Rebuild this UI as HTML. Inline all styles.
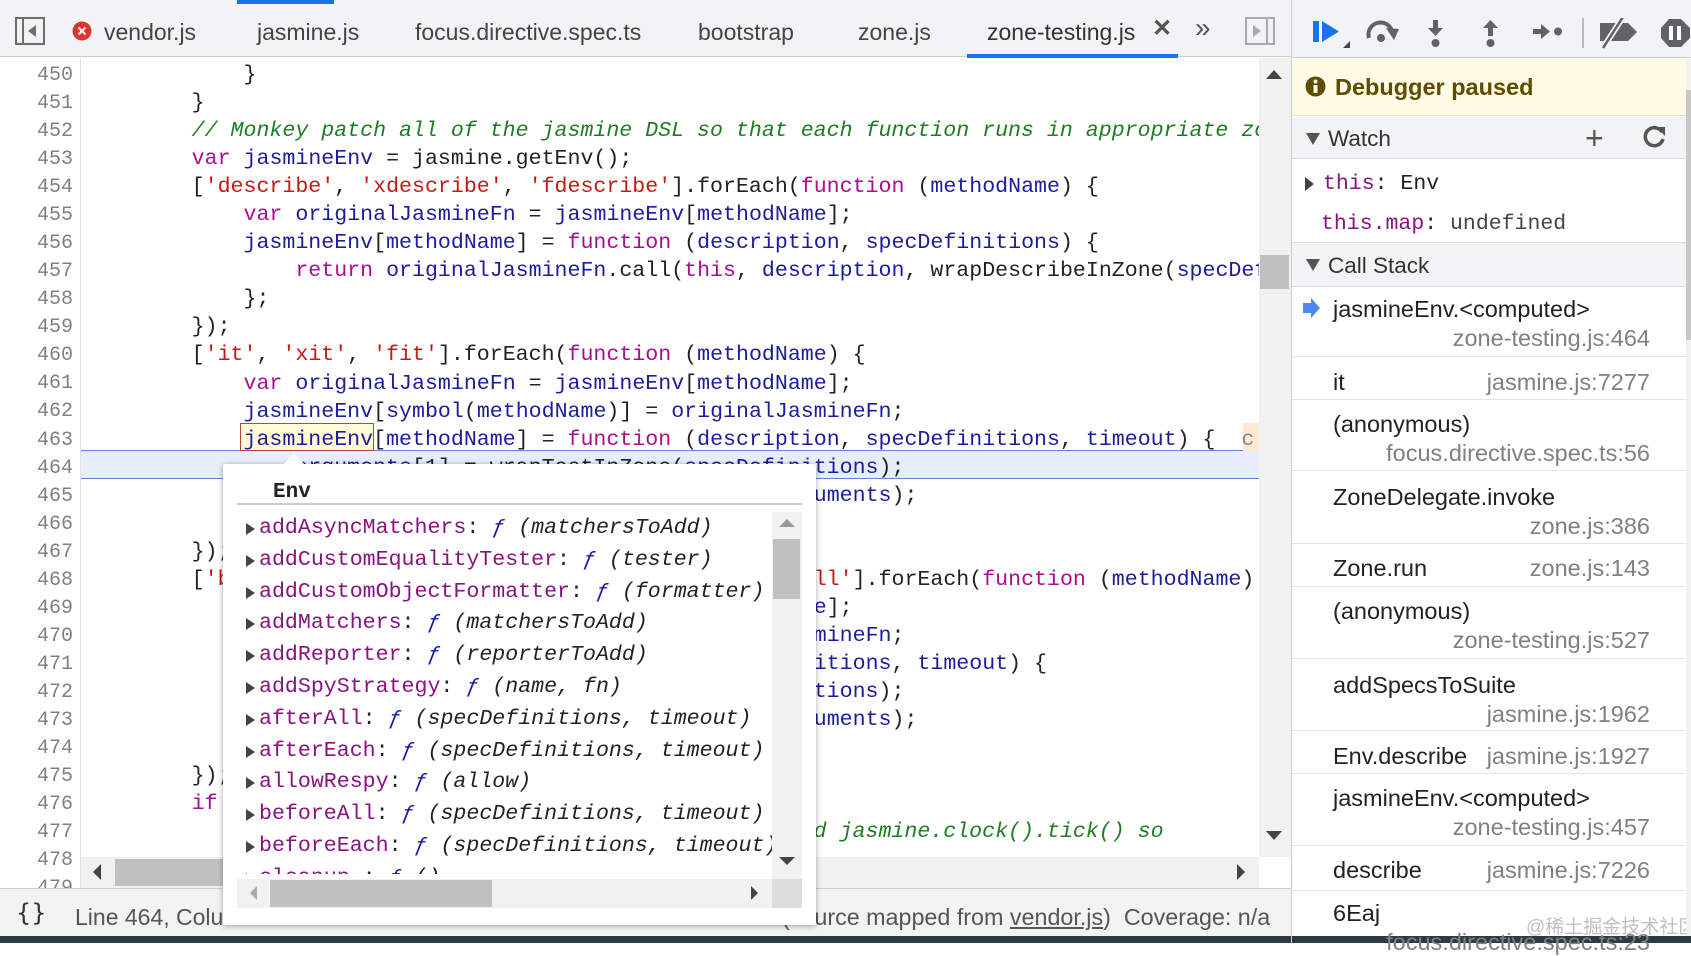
<!DOCTYPE html>
<html><head><meta charset="utf-8"><style>
*{margin:0;padding:0;box-sizing:border-box}
body{width:1691px;height:943px;overflow:hidden;background:#fff;position:relative;font-family:"Liberation Sans",sans-serif;color:#222}
.abs{position:absolute}
.mono{font-family:"Liberation Mono",monospace;font-size:21.6px}
.tab{position:absolute;top:19px;font-size:23px;color:#444;white-space:nowrap}
pre{font-family:"Liberation Mono",monospace;font-size:21.6px;line-height:28.04px;white-space:pre;color:#222}
.k{color:#aa0d91}.v{color:#1c1c9c}.s{color:#c41a16}.c{color:#1e7d22;font-style:italic}
.ln{position:absolute;left:0;width:73px;text-align:right;font-family:"Liberation Mono",monospace;font-size:20px;color:#808080;line-height:28.04px}
.cs{position:absolute;left:1292px;width:394px;border-bottom:1px solid #e4e4e4;font-size:23.5px;color:#222}
.cs .n{position:absolute;left:41px}
.cs .f{position:absolute;right:36px;color:#808080}
.pi{height:31.8px;line-height:31.8px;white-space:pre;position:relative;padding-left:22px}
.pi:before{content:"";position:absolute;left:9px;top:10px;border-left:9px solid #444;border-top:6px solid transparent;border-bottom:6px solid transparent}
.pn{color:#881280}.pf{color:#1a1aa6;font-style:italic}.pp{font-style:italic;color:#222}
</style></head><body>
<!-- tab bar -->
<div class="abs" style="left:0;top:0;width:1291px;height:57px;background:#f1f3f4;border-bottom:1px solid #cbcdd1"></div>
<div class="abs" style="left:237px;top:0;width:97px;height:4px;background:#1a73e8"></div>
<svg class="abs" style="left:15px;top:17px" width="31" height="29"><rect x="1" y="1" width="28" height="26" fill="none" stroke="#6e6e6e" stroke-width="2"/><line x1="8" y1="1" x2="8" y2="27" stroke="#6e6e6e" stroke-width="2"/><path d="M21 8 L13 14 L21 20Z" fill="#6e6e6e"/></svg>
<svg class="abs" style="left:72px;top:21px" width="20" height="20"><circle cx="10" cy="10" r="9.5" fill="#e0342f"/><path d="M6.5 6.5L13.5 13.5M13.5 6.5L6.5 13.5" stroke="#fff" stroke-width="2"/></svg>
<div class="tab" style="left:104px">vendor.js</div>
<div class="tab" style="left:257px">jasmine.js</div>
<div class="tab" style="left:415px">focus.directive.spec.ts</div>
<div class="tab" style="left:698px">bootstrap</div>
<div class="tab" style="left:858px">zone.js</div>
<div class="tab" style="left:987px;color:#333">zone-testing.js</div>
<div class="abs" style="left:1152px;top:14px;font-size:24px;color:#555;font-weight:bold">✕</div>
<div class="abs" style="left:1195px;top:12px;font-size:28px;color:#555">»</div>
<svg class="abs" style="left:1245px;top:17px" width="31" height="29"><rect x="1" y="1" width="28" height="26" fill="none" stroke="#aaa" stroke-width="2"/><line x1="22" y1="1" x2="22" y2="27" stroke="#aaa" stroke-width="2"/><path d="M8 8 L16 14 L8 20Z" fill="#aaa"/></svg>
<div class="abs" style="left:967px;top:54px;width:211px;height:4px;background:#1a73e8"></div>

<!-- gutter & code -->
<div class="abs" style="left:80px;top:58px;width:1px;height:831px;background:#e0e0e0"></div>
<div class="abs" style="left:81px;top:450px;width:1178px;height:29px;background:#e6eefc;border-top:1px solid #5b85d9;border-bottom:1px solid #5b85d9"></div>
<div class="abs" style="left:240px;top:423px;width:134px;height:28px;background:#fffbd6;border:1px solid #b9443a"></div>
<div class="abs" style="left:1243px;top:423px;width:16px;height:28px;background:#fde9d3"></div>
<div class="abs" style="left:0;top:62px">
<div class="ln" style="top:0">450</div><div class="ln" style="top:28.04px">451</div><div class="ln" style="top:56.08px">452</div><div class="ln" style="top:84.12px">453</div><div class="ln" style="top:112.16px">454</div><div class="ln" style="top:140.2px">455</div><div class="ln" style="top:168.24px">456</div><div class="ln" style="top:196.28px">457</div><div class="ln" style="top:224.32px">458</div><div class="ln" style="top:252.36px">459</div><div class="ln" style="top:280.4px">460</div><div class="ln" style="top:308.44px">461</div><div class="ln" style="top:336.48px">462</div><div class="ln" style="top:364.52px">463</div><div class="ln" style="top:392.56px">464</div><div class="ln" style="top:420.6px">465</div><div class="ln" style="top:448.64px">466</div><div class="ln" style="top:476.68px">467</div><div class="ln" style="top:504.72px">468</div><div class="ln" style="top:532.76px">469</div><div class="ln" style="top:560.8px">470</div><div class="ln" style="top:588.84px">471</div><div class="ln" style="top:616.88px">472</div><div class="ln" style="top:644.92px">473</div><div class="ln" style="top:672.96px">474</div><div class="ln" style="top:701px">475</div><div class="ln" style="top:729.04px">476</div><div class="ln" style="top:757.08px">477</div><div class="ln" style="top:785.12px">478</div><div class="ln" style="top:813.16px">479</div>
</div>
<div class="abs" style="left:88px;top:58px;width:1171px;height:799px;overflow:hidden">
<pre style="margin-top:3px">            }
        }
        <span class="c">// Monkey patch all of the jasmine DSL so that each function runs in appropriate zone.</span>
        <span class="k">var</span> <span class="v">jasmineEnv</span> = jasmine.getEnv();
        [<span class="s">'describe'</span>, <span class="s">'xdescribe'</span>, <span class="s">'fdescribe'</span>].forEach(<span class="k">function</span> (<span class="v">methodName</span>) {
            <span class="k">var</span> <span class="v">originalJasmineFn</span> = <span class="v">jasmineEnv</span>[<span class="v">methodName</span>];
            <span class="v">jasmineEnv</span>[<span class="v">methodName</span>] = <span class="k">function</span> (<span class="v">description</span>, <span class="v">specDefinitions</span>) {
                <span class="k">return</span> <span class="v">originalJasmineFn</span>.call(<span class="k">this</span>, <span class="v">description</span>, wrapDescribeInZone(<span class="v">specDefinitions</span>));
            };
        });
        [<span class="s">'it'</span>, <span class="s">'xit'</span>, <span class="s">'fit'</span>].forEach(<span class="k">function</span> (<span class="v">methodName</span>) {
            <span class="k">var</span> <span class="v">originalJasmineFn</span> = <span class="v">jasmineEnv</span>[<span class="v">methodName</span>];
            <span class="v">jasmineEnv</span>[<span class="v">symbol</span>(<span class="v">methodName</span>)] = <span class="v">originalJasmineFn</span>;
            <span class="v">jasmineEnv</span>[<span class="v">methodName</span>] = <span class="k">function</span> (<span class="v">description</span>, <span class="v">specDefinitions</span>, <span class="v">timeout</span>) {  <span style="color:#888">c</span>
                <span class="v">arguments</span>[1] = wrapTestInZone(<span class="v">specDefinitions</span>);
                <span class="k">return</span> <span class="v">originalJasmineFn</span>.apply(<span class="k">this</span>, <span class="v">arguments</span>);
            };
        });
        [<span class="s">'beforeEach'</span>, <span class="s">'afterEach'</span>, <span class="s">'beforeAll'</span>, <span class="s">'afterAll'</span>].forEach(<span class="k">function</span> (<span class="v">methodName</span>) {
            <span class="k">var</span> <span class="v">originalJasmineFn</span> = <span class="v">jasmineEnv</span>[<span class="v">methodName</span>];
            <span class="v">jasmineEnv</span>[<span class="v">symbol</span>(<span class="v">methodName</span>)] = <span class="v">originalJasmineFn</span>;
            <span class="v">jasmineEnv</span>[<span class="v">methodName</span>] = <span class="k">function</span> (<span class="v">specDefinitions</span>, <span class="v">timeout</span>) {
                <span class="v">arguments</span>[0] = wrapTestInZone(<span class="v">specDefinitions</span>);
                <span class="k">return</span> <span class="v">originalJasmineFn</span>.apply(<span class="k">this</span>, <span class="v">arguments</span>);
            };
        });
        <span class="k">if</span> (enableClockPatch) {
                                                        <span class="c">d jasmine.clock().tick() so</span>
</pre></div>
<!-- code scrollbars -->
<div class="abs" style="left:1259px;top:58px;width:32px;height:799px;background:#f1f1f1"></div>
<div class="abs" style="left:1260px;top:255px;width:29px;height:34px;background:#c1c1c1"></div>
<div class="abs" style="left:1266px;top:70px;border-bottom:9px solid #444;border-left:8px solid transparent;border-right:8px solid transparent"></div>
<div class="abs" style="left:1266px;top:831px;border-top:9px solid #444;border-left:8px solid transparent;border-right:8px solid transparent"></div>
<div class="abs" style="left:81px;top:857px;width:1178px;height:31px;background:#f1f1f1"></div>
<div class="abs" style="left:115px;top:859px;width:120px;height:27px;background:#c1c1c1"></div>
<div class="abs" style="left:93px;top:864px;border-right:8px solid #444;border-top:8px solid transparent;border-bottom:8px solid transparent"></div>
<div class="abs" style="left:1237px;top:864px;border-left:8px solid #444;border-top:8px solid transparent;border-bottom:8px solid transparent"></div>

<!-- status bar -->
<div class="abs" style="left:0;top:888px;width:1291px;height:48px;background:#f3f3f3;border-top:1px solid #cbcdd1"></div>
<div class="abs" style="left:16px;top:899px;font-size:24px;color:#333;font-family:'DejaVu Sans',sans-serif">{}</div>
<div class="abs" style="left:75px;top:904px;font-size:23px;color:#555">Line 464, Column 17</div>
<div class="abs" style="left:782px;top:904px;font-size:23.3px;color:#555;white-space:nowrap">(source mapped from <u>vendor.js</u>)&nbsp; Coverage: n/a</div>
<div class="abs" style="left:0;top:936px;width:1691px;height:7px;background:#2d3b42"></div>

<!-- popup -->
<div class="abs" style="left:223px;top:464px;width:593px;height:461px;background:#fff;box-shadow:0 1px 6px rgba(0,0,0,.35);border-radius:2px"></div>
<div class="abs" style="left:283px;top:453px;border-bottom:12px solid #fff;border-left:11px solid transparent;border-right:11px solid transparent"></div>
<div class="abs mono" style="left:273px;top:481px;font-weight:bold;font-size:21px">Env</div>
<div class="abs" style="left:237px;top:503px;width:565px;height:2px;background:#ccc"></div>
<div class="abs mono" style="left:237px;top:510px;width:535px;height:364px;overflow:hidden">
<div style="height:3px"></div>
<div class="pi"><span class="pn">addAsyncMatchers</span>: <span class="pf">ƒ</span> <span class="pp">(matchersToAdd)</span></div>
<div class="pi"><span class="pn">addCustomEqualityTester</span>: <span class="pf">ƒ</span> <span class="pp">(tester)</span></div>
<div class="pi"><span class="pn">addCustomObjectFormatter</span>: <span class="pf">ƒ</span> <span class="pp">(formatter)</span></div>
<div class="pi"><span class="pn">addMatchers</span>: <span class="pf">ƒ</span> <span class="pp">(matchersToAdd)</span></div>
<div class="pi"><span class="pn">addReporter</span>: <span class="pf">ƒ</span> <span class="pp">(reporterToAdd)</span></div>
<div class="pi"><span class="pn">addSpyStrategy</span>: <span class="pf">ƒ</span> <span class="pp">(name, fn)</span></div>
<div class="pi"><span class="pn">afterAll</span>: <span class="pf">ƒ</span> <span class="pp">(specDefinitions, timeout)</span></div>
<div class="pi"><span class="pn">afterEach</span>: <span class="pf">ƒ</span> <span class="pp">(specDefinitions, timeout)</span></div>
<div class="pi"><span class="pn">allowRespy</span>: <span class="pf">ƒ</span> <span class="pp">(allow)</span></div>
<div class="pi"><span class="pn">beforeAll</span>: <span class="pf">ƒ</span> <span class="pp">(specDefinitions, timeout)</span></div>
<div class="pi"><span class="pn">beforeEach</span>: <span class="pf">ƒ</span> <span class="pp">(specDefinitions, timeout)</span></div>
<div class="pi"><span class="pn">cleanup_</span>: <span class="pf">ƒ</span> <span class="pp">()</span></div>
</div>
<div class="abs" style="left:772px;top:512px;width:30px;height:367px;background:#f1f1f1"></div>
<div class="abs" style="left:773px;top:539px;width:27px;height:60px;background:#c1c1c1"></div>
<div class="abs" style="left:779px;top:519px;border-bottom:8px solid #999;border-left:8px solid transparent;border-right:8px solid transparent"></div>
<div class="abs" style="left:779px;top:857px;border-top:8px solid #444;border-left:8px solid transparent;border-right:8px solid transparent"></div>
<div class="abs" style="left:237px;top:879px;width:565px;height:29px;background:#f1f1f1"></div>
<div class="abs" style="left:270px;top:880px;width:222px;height:27px;background:#c1c1c1"></div>
<div class="abs" style="left:250px;top:886px;border-right:7px solid #aaa;border-top:7px solid transparent;border-bottom:7px solid transparent"></div>
<div class="abs" style="left:751px;top:886px;border-left:7px solid #444;border-top:7px solid transparent;border-bottom:7px solid transparent"></div>
<div class="abs" style="left:772px;top:879px;width:30px;height:29px;background:#ddd"></div>

<!-- right panel -->
<div class="abs" style="left:1291px;top:0;width:1px;height:943px;background:#cbcdd1"></div>
<div class="abs" style="left:1292px;top:0;width:399px;height:58px;background:#f1f3f4;border-bottom:1px solid #cbcdd1"></div>
<svg class="abs" style="left:1310px;top:18px" width="380" height="32">
 <rect x="3" y="3" width="6" height="21" fill="#1a73e8"/><path d="M12 3 L29 13.5 L12 24Z" fill="#1a73e8"/><path d="M33 30 L40 30 L40 23Z" fill="#444"/>
 <path d="M59 20 A12 12 0 0 1 82 13" fill="none" stroke="#5f6368" stroke-width="4"/><path d="M76 10 L89 11 L84 22Z" fill="#5f6368"/><circle cx="71" cy="20" r="4" fill="#5f6368"/>
 <rect x="123" y="2" width="5" height="10" fill="#5f6368"/><path d="M118 10 L133 10 L125.5 18Z" fill="#5f6368"/><circle cx="125.5" cy="25" r="4" fill="#5f6368"/>
 <path d="M173 10 L188 10 L180.5 2Z" fill="#5f6368"/><rect x="178" y="9" width="5" height="9" fill="#5f6368"/><circle cx="180.5" cy="25" r="4" fill="#5f6368"/>
 <rect x="223" y="11" width="10" height="5" fill="#5f6368"/><path d="M231 6 L240 13.5 L231 21Z" fill="#5f6368"/><circle cx="248" cy="13.5" r="4" fill="#5f6368"/>
 <rect x="272" y="0" width="2" height="30" fill="#bbb"/>
 <path d="M290 5 L318 5 L327 14 L318 23 L290 23Z" fill="#5f6368"/><line x1="293" y1="30" x2="313" y2="-1" stroke="#f1f3f4" stroke-width="6"/><line x1="293" y1="30" x2="313" y2="-1" stroke="#5f6368" stroke-width="2.5"/>
 <path d="M359 1 L371 1 L380 10 L380 20 L371 29 L359 29 L351 20 L351 10Z" fill="#5f6368"/><rect x="359" y="8" width="4" height="14" fill="#fff"/><rect x="367" y="8" width="4" height="14" fill="#fff"/>
</svg>
<div class="abs" style="left:1292px;top:59px;width:394px;height:57px;background:#fffbe5;border-bottom:1px solid #e6e0c8"></div>
<svg class="abs" style="left:1305px;top:76px" width="21" height="21"><circle cx="10.5" cy="10.5" r="10" fill="#5e4d00"/><rect x="8.5" y="9" width="4" height="8" fill="#fffbe5"/><circle cx="10.5" cy="5.5" r="2" fill="#fffbe5"/></svg>
<div class="abs" style="left:1335px;top:74px;font-size:23.5px;font-weight:bold;color:#5e4d00">Debugger paused</div>
<div class="abs" style="left:1292px;top:117px;width:394px;height:42px;background:#f1f3f4;border-bottom:1px solid #ddd"></div>
<div class="abs" style="left:1306px;top:133px;border-top:12px solid #555;border-left:7px solid transparent;border-right:7px solid transparent"></div>
<div class="abs" style="left:1328px;top:126px;font-size:22.5px;color:#333">Watch</div>
<div class="abs" style="left:1585px;top:120px;font-size:32px;color:#555">+</div>
<svg class="abs" style="left:1641px;top:124px" width="26" height="26"><path d="M21 8 A9 9 0 1 0 22 15" fill="none" stroke="#555" stroke-width="3.5"/><path d="M15 3 L24 3 L24 12Z" fill="#555"/></svg>
<div class="abs" style="left:1305px;top:177px;border-left:9px solid #444;border-top:7px solid transparent;border-bottom:7px solid transparent"></div>
<div class="abs mono" style="left:1323px;top:172px;font-size:21.5px"><span class="pn">this</span>: Env</div>
<div class="abs mono" style="left:1321px;top:212px;font-size:21.5px"><span class="pn">this.map</span>: <span style="color:#444">undefined</span></div>
<div class="abs" style="left:1292px;top:242px;width:394px;height:45px;background:#f1f3f4;border-top:1px solid #ddd;border-bottom:1px solid #ddd"></div>
<div class="abs" style="left:1306px;top:259px;border-top:12px solid #555;border-left:7px solid transparent;border-right:7px solid transparent"></div>
<div class="abs" style="left:1328px;top:253px;font-size:22.5px;color:#333">Call Stack</div>
<svg class="abs" style="left:1303px;top:298px" width="17" height="20"><path d="M0 5 L8 5 L8 0 L17 10 L8 20 L8 15 L0 15Z" fill="#4a89e8"/></svg>
<div class="cs" style="top:287px;height:70px"><span class="n" style="top:9px">jasmineEnv.&lt;computed&gt;</span><span class="f" style="top:38px">zone-testing.js:464</span></div>
<div class="cs" style="top:357px;height:43px"><span class="n" style="top:12px">it</span><span class="f" style="top:12px">jasmine.js:7277</span></div>
<div class="cs" style="top:400px;height:71px"><span class="n" style="top:11px">(anonymous)</span><span class="f" style="top:40px">focus.directive.spec.ts:56</span></div>
<div class="cs" style="top:471px;height:73px"><span class="n" style="top:13px">ZoneDelegate.invoke</span><span class="f" style="top:42px">zone.js:386</span></div>
<div class="cs" style="top:544px;height:43px"><span class="n" style="top:11px">Zone.run</span><span class="f" style="top:11px">zone.js:143</span></div>
<div class="cs" style="top:587px;height:72px"><span class="n" style="top:11px">(anonymous)</span><span class="f" style="top:40px">zone-testing.js:527</span></div>
<div class="cs" style="top:659px;height:72px"><span class="n" style="top:13px">addSpecsToSuite</span><span class="f" style="top:42px">jasmine.js:1962</span></div>
<div class="cs" style="top:731px;height:43px"><span class="n" style="top:12px">Env.describe</span><span class="f" style="top:12px">jasmine.js:1927</span></div>
<div class="cs" style="top:774px;height:72px"><span class="n" style="top:11px">jasmineEnv.&lt;computed&gt;</span><span class="f" style="top:40px">zone-testing.js:457</span></div>
<div class="cs" style="top:846px;height:45px"><span class="n" style="top:11px">describe</span><span class="f" style="top:11px">jasmine.js:7226</span></div>
<div class="cs" style="top:891px;height:60px;border:none"><span class="n" style="top:9px">6Eaj</span><span class="f" style="top:38px">focus.directive.spec.ts:23</span></div>
<div class="abs" style="left:1526px;top:912px;font-size:19px;color:rgba(150,150,150,.6);font-family:'Liberation Sans','Noto Sans CJK SC',sans-serif;white-space:nowrap">@稀土掘金技术社区</div>
<div class="abs" style="left:1686px;top:59px;width:5px;height:877px;background:#f1f1f1"></div>
<div class="abs" style="left:1686px;top:90px;width:5px;height:250px;background:#c8c8c8"></div>
</body></html>
